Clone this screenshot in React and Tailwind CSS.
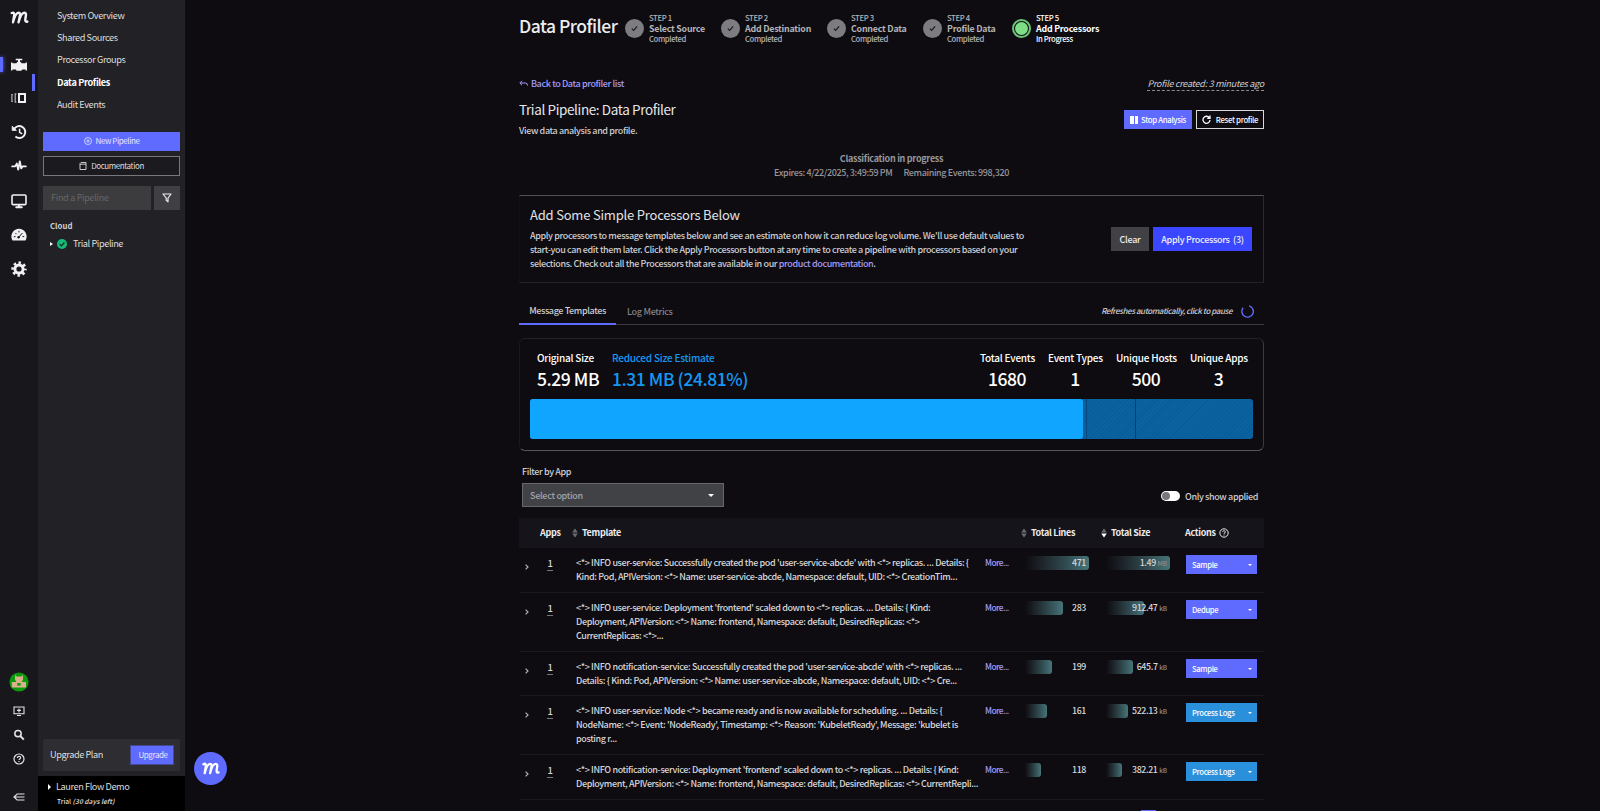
import React, { useState } from "react";

const navLinks = [
  "System Overview",
  "Shared Sources",
  "Processor Groups",
  "Data Profiles",
  "Audit Events",
];

const steps = [
  { title: "Select Source", status: "Completed", width: "w-[96px]" },
  { title: "Add Destination", status: "Completed", width: "w-[106px]" },
  { title: "Connect Data", status: "Completed", width: "w-[96px]" },
  { title: "Profile Data", status: "Completed", width: "w-[89px]" },
  { title: "Add Processors", status: "In Progress", width: "w-[90px]" },
];

const stats = [
  { label: "Total Events", value: "1680", width: "w-[54px]" },
  { label: "Event Types", value: "1", width: "w-[54px]" },
  { label: "Unique Hosts", value: "500", width: "w-[60px]" },
  { label: "Unique Apps", value: "3", width: "w-[57px]" },
];

const rows = [
  {
    lines: 471,
    size: "1.49",
    unit: "MB",
    action: "Sample",
    height: "h-[45px]",
    text: [
      "<*> INFO user-service: Successfully created the pod 'user-service-abcde' with <*> replicas. ... Details: {",
      "Kind: Pod, APIVersion: <*> Name: user-service-abcde, Namespace: default, UID: <*> CreationTim...",
    ],
  },
  {
    lines: 283,
    size: "912.47",
    unit: "kB",
    action: "Dedupe",
    height: "h-[59px]",
    text: [
      "<*> INFO user-service: Deployment 'frontend' scaled down to <*> replicas. ... Details: { Kind:",
      "Deployment, APIVersion: <*> Name: frontend, Namespace: default, DesiredReplicas: <*>",
      "CurrentReplicas: <*>...",
    ],
  },
  {
    lines: 199,
    size: "645.7",
    unit: "kB",
    action: "Sample",
    height: "h-[44px]",
    text: [
      "<*> INFO notification-service: Successfully created the pod 'user-service-abcde' with <*> replicas. ...",
      "Details: { Kind: Pod, APIVersion: <*> Name: user-service-abcde, Namespace: default, UID: <*> Cre...",
    ],
  },
  {
    lines: 161,
    size: "522.13",
    unit: "kB",
    action: "Process Logs",
    height: "h-[59px]",
    text: [
      "<*> INFO user-service: Node <*> became ready and is now available for scheduling. ... Details: {",
      "NodeName: <*> Event: 'NodeReady', Timestamp: <*> Reason: 'KubeletReady', Message: 'kubelet is",
      "posting r...",
    ],
  },
  {
    lines: 118,
    size: "382.21",
    unit: "kB",
    action: "Process Logs",
    height: "h-[45px]",
    text: [
      "<*> INFO notification-service: Deployment 'frontend' scaled down to <*> replicas. ... Details: { Kind:",
      "Deployment, APIVersion: <*> Name: frontend, Namespace: default, DesiredReplicas: <*> CurrentRepli...",
    ],
  },
];

function Logo({ className }) {
  return (
    <svg viewBox="0 0 20 14" className={className} fill="none" stroke="currentColor" strokeWidth="2.6" strokeLinecap="round" strokeLinejoin="round">
      <path d="M1.6 2.2C4 1 4.6 2.6 4.2 5L3 12.2C4.4 6.5 6.4 1.8 9 1.8c2 0 1.8 2 1.3 4.2L9 12.2c1.4-5.7 3.6-10.4 6.2-10.4 2 0 1.9 2 1.5 4.2-.6 3.4-1 6.2 1.7 5.4" />
    </svg>
  );
}

// Icons of the left rail
function RailIcon({ name }) {
  const line = {
    fill: "none",
    stroke: "currentColor",
    strokeWidth: 1.6,
    strokeLinecap: "round",
    strokeLinejoin: "round",
  };
  return (
    <svg viewBox="0 0 16 16" className="size-4 text-[#f1f1f3]" fill="currentColor">
      {name === "pipeline" && (
        <path d="M4.7 1.8h6.6v1.5H9v1.5c.8.2 1.300.7 1.600 1.500h4v-.9H16v8h-1.400v-.9h-3.400c-.2.800-.7 1.200-1.400 1.200H6.200c-.7 0-1.200-.4-1.400-1.200H1.400v.9H0v-8h1.400v.9h4c.3-.8.8-1.300 1.600-1.500V3.300H4.700z" />
      )}
      {name === "split" && (
        <>
          <path d="M8 4h6v8H8z" fill="none" stroke="currentColor" strokeWidth="2" />
          <path d="M5.400 3.900H4.200v8.200h1.200M1.900 4.700H.9v6.600h1" fill="none" stroke="#b5b5b9" strokeWidth="1.200" />
        </>
      )}
      {name === "history" && (
        <g {...line} strokeWidth="2" strokeLinecap="butt">
          <path d="M2.800 5.600A6 6 0 1 1 4.400 12.600" />
          <path d="M8.600 4.800v3.600l2.600 1.500" strokeWidth="1.500" />
          <path d="M1.200 2.200v4.200h4.200z" fill="currentColor" strokeWidth=".8" />
        </g>
      )}
      {name === "pulse" && (
        <path {...line} strokeWidth="1.900" d="M1.200 8.400h3L5.800 5.600 7.200 11.600 8.800 3.400l1.400 7L11.400 8.400h3.400" />
      )}
      {name === "monitor" && (
        <g {...line}>
          <rect x="1" y="2" width="14" height="9.600" rx="1.200" />
          <path d="M5.200 14.200h5.600M8 12v2" strokeWidth="1.900" />
        </g>
      )}
      {name === "gauge" && (
        <>
          <path d="M8 1.800a7.600 7.600 0 0 0-7 10.600c.3.900.8 1.200 1.500 1.200h11c.7 0 1.200-.3 1.500-1.200A7.600 7.600 0 0 0 8 1.800z" />
          <path d="M7.600 10.300l3.600-4M3.200 9.800l1-.3M4.600 6.200l.7.700M8 4.200v.9M12.800 9.600l-.9-.1" stroke="#19181d" strokeWidth="1" strokeLinecap="round" />
          <circle cx="7.600" cy="10.300" r="1.200" fill="#19181d" />
        </>
      )}
      {name === "gear" && (
        <g fill="none" stroke="currentColor">
          <circle cx="8" cy="8" r="4.100" strokeWidth="3" />
          <circle cx="8" cy="8" r="6.400" strokeWidth="2.600" strokeDasharray="2.500 2.527" strokeDashoffset="1.250" />
        </g>
      )}
    </svg>
  );
}

function HelpIcon({ className }) {
  return (
    <svg viewBox="0 0 12 12" className={className} fill="none" stroke="currentColor" strokeWidth="1.200">
      <circle cx="6" cy="6" r="5" />
      <path d="M4.400 4.900c0-2.200 3.300-2.100 3.200-.1 0 1.200-1.600 1.100-1.600 2.300M6 7.900v1.100" />
    </svg>
  );
}

function Rail() {
  return (
    <div className="flex w-[38px] shrink-0 flex-col items-center bg-[#18171b] text-[#e4e4e8]">
      <Logo className="mt-[11px] h-[13px] w-[19px] text-[#f4f4f6]" />
      <div className="mt-[32px] flex h-[17px] w-full items-center">
        <span className="h-[15px] w-[3px] bg-[#5f6bff] shadow-[0_0_4px_#5f6bff]" />
        <span className="ml-[8px]">
          <RailIcon name="pipeline" />
        </span>
      </div>
      <div className="mt-[17px] flex flex-col gap-[18.200px]">
        {["split", "history", "pulse", "monitor", "gauge", "gear"].map((name) => (
          <RailIcon key={name} name={name} />
        ))}
      </div>
      <svg viewBox="0 0 20 20" className="mt-auto size-[20px]">
        <circle cx="10" cy="10" r="9.600" fill="#0c9a0c" />
        <path d="M6 3l1.600 1.600h4.800L14 3v4.600L12.600 10H17v5.600H2.800V10h4.600L6 7.600z" fill="#d9b08c" />
        <path d="M8.200 11h3.400v2.600H8.200z" fill="#0c9a0c" />
      </svg>
      <svg viewBox="0 0 12 12" className="mt-[13px] size-[12px]" fill="none" stroke="currentColor" strokeWidth="1.100">
        <path d="M1 2h10v6.800H1zM4 10.500h4M6 3.400v4M4 5.400h4" />
      </svg>
      <svg viewBox="0 0 12 12" className="mt-[12px] size-[12px]" fill="none" stroke="currentColor" strokeWidth="1.500">
        <circle cx="5" cy="4.600" r="3.200" />
        <path d="M7.300 7l3.500 3.600" strokeWidth="1.900" />
      </svg>
      <HelpIcon className="mt-[12px] size-[12px]" />
      <svg viewBox="0 0 12 10" className="mt-[27px] mb-[9px] h-[10px] w-[12px]" fill="none" stroke="currentColor" strokeWidth="1.200">
        <path d="M1 5h10.500M4.600 1.600L1 5l3.600 3.400M4.800 2h6.700M4.800 8h6.700" />
      </svg>
    </div>
  );
}

function Sidebar() {
  return (
    <div className="flex w-[147px] shrink-0 flex-col bg-[#222226] tracking-[-0.42px] text-[#dededf]">
      <div className="flex flex-col pt-[4.500px]">
        {navLinks.map((link) => (
          <a
            key={link}
            className={
              link === "Data Profiles"
                ? "relative flex h-[22.200px] items-center pl-[19px] text-[9.200px] font-bold tracking-[-0.36px] text-white"
                : "flex h-[22.200px] items-center pl-[19px] text-[9.200px]"
            }
          >
            {link === "Data Profiles" && (
              <span className="absolute top-[3px] left-[-6px] h-[17px] w-[3px] bg-[#5f6bff]" />
            )}
            {link}
          </a>
        ))}
      </div>
      <div className="mt-[16.500px] flex flex-col pr-[5px] pl-[5px]">
        <button className="flex h-[19px] items-center justify-center gap-[4px] bg-[#5f6bff] text-[8px] text-[#e6e8ff]">
          <svg viewBox="0 0 8 8" className="size-[8px]" fill="none" stroke="currentColor" strokeWidth=".8">
            <circle cx="4" cy="4" r="3.500" />
            <path d="M4 2.200v3.600M2.200 4h3.600" />
          </svg>
          New Pipeline
        </button>
        <button className="mt-[5px] flex h-[20px] items-center justify-center gap-[4px] border border-[#77777c] bg-[#1b1a1e] text-[8px]">
          <svg viewBox="0 0 8 8" className="size-[8px]" fill="none" stroke="currentColor" strokeWidth=".9">
            <path d="M1 1.500L2 .5h5v7H1zM1 2.200h6" />
          </svg>
          Documentation
        </button>
        <div className="mt-[10px] flex h-[24px] gap-[3px]">
          <div className="flex flex-1 items-center bg-[#3c3c3f] pl-[8px] text-[9px] tracking-[-0.28px] text-[#666669]">
            Find a Pipeline
          </div>
          <div className="flex w-[26px] items-center justify-center bg-[#404044]">
            <svg viewBox="0 0 10 10" className="size-[10px] text-[#ececee]" fill="none" stroke="currentColor" strokeWidth="1.200" strokeLinejoin="round">
              <path d="M1 1h8L6 5v3.800L4.200 7.400V5z" />
            </svg>
          </div>
        </div>
        <div className="mt-[9px] h-[14px] pl-[7px] text-[7.800px] leading-[14px] font-bold tracking-normal text-[#cfcfd1]">
          Cloud
        </div>
        <div className="mt-[3px] flex h-[16px] items-center pl-[7px] text-[9.200px]">
          <span className="h-0 w-0 border-y-[2.500px] border-l-[3px] border-y-transparent border-l-white" />
          <svg viewBox="0 0 10 10" className="ml-[4px] size-[10px]">
            <circle cx="5" cy="5" r="5" fill="#16b877" />
            <path d="M2.700 5.100l1.700 1.700 3-3.300" fill="none" stroke="#17251f" strokeWidth="1.200" />
          </svg>
          <span className="ml-[6px]">Trial Pipeline</span>
        </div>
      </div>
      <div className="mx-[5px] mt-auto mb-[5px] flex h-[32px] items-center justify-between rounded-xs bg-[#2e2e32] pr-[6px] pl-[7px] text-[9.200px]">
        Upgrade Plan
        <button className="h-[20px] w-[44px] border border-[#45498f] bg-[#5f6bff] pl-[2px] text-[8px] text-[#e6e8ff]">
          Upgrade
        </button>
      </div>
      <div className="h-[35px] bg-black pt-[4px] pl-[10px]">
        <div className="flex h-[14px] items-center gap-[5px] text-[9.200px]">
          <span className="h-0 w-0 border-y-[3px] border-l-[3px] border-y-transparent border-l-white" />
          Lauren Flow Demo
        </div>
        <div className="pl-[9px] text-[6.600px] leading-[14px] font-medium tracking-normal">
          Trial <i className="font-bold text-[#c5c5c8]">(30 days left)</i>
        </div>
      </div>
    </div>
  );
}

function Steps() {
  return (
    <div className="flex h-[58px] items-center">
      <h1 className="w-[106px] pb-[7px] text-[17.500px] tracking-[-0.5px] whitespace-nowrap text-[#ededef]">
        Data Profiler
      </h1>
      {steps.map((step, i) => {
        const current = i === steps.length - 1;
        return (
          <div key={step.title} className={`flex items-center ${step.width} shrink-0`}>
            {current ? (
              <span className="flex size-[19px] shrink-0 items-center justify-center rounded-full border-2 border-[#6cc476]">
                <span className="size-[13px] rounded-full bg-[#7ede86]" />
              </span>
            ) : (
              <span className="flex size-[19px] shrink-0 items-center justify-center rounded-full bg-[#7d7d81]">
                <svg viewBox="0 0 8 8" className="size-[7px]" fill="none" stroke="#1b1a1f" strokeWidth="1.400">
                  <path d="M1 4.200l2 2L7 1.600" />
                </svg>
              </span>
            )}
            <div
              className={
                current
                  ? "ml-[5px] text-[7.700px] leading-[10.700px] font-medium whitespace-nowrap text-white"
                  : "ml-[5px] text-[7.700px] leading-[10.700px] whitespace-nowrap text-[#b4b4b8]"
              }
            >
              <div>STEP {i + 1}</div>
              <div className="text-[8.800px] font-bold tracking-[-0.2px]">{step.title}</div>
              <div>{step.status}</div>
            </div>
          </div>
        );
      })}
    </div>
  );
}

function SortIcon({ down }) {
  return (
    <svg viewBox="0 0 6 10" className="h-[10px] w-[6px] shrink-0">
      <path d="M3 .5L5.800 4.400H.2z" fill="#6a6a70" />
      <path d="M3 9.500L.2 5.600h5.600z" fill={down ? "#ffffff" : "#6a6a70"} />
    </svg>
  );
}

// Bar behind the number, scaled on the biggest template
function MeterCell({ lines, children }) {
  return (
    <div className="relative mt-[8px] h-[14px] w-[64px] shrink-0 text-right text-[8.800px] leading-[14px]">
      <div
        className="absolute inset-y-0 left-0 rounded-r-[3px] bg-linear-to-r from-[#0e0c11] to-[#45757a]"
        style={{ width: `${(lines / 471) * 100}%` }}
      />
      <span className="relative whitespace-nowrap">{children}</span>
    </div>
  );
}

function TemplateRow({ row }) {
  return (
    <div className={`flex border-b border-[#19181d] ${row.height}`}>
      <svg viewBox="0 0 4 6" className="mt-[16px] ml-[6px] h-[6px] w-[4px]" fill="none" stroke="#b0b0b4" strokeWidth="1.200">
        <path d="M.6.600L3 3 .6 5.400" />
      </svg>
      <div className="mt-[8px] ml-[18px] h-[15px] w-[6px] border-b border-dashed border-[#77777c] text-center text-[9.500px] leading-[14px]">
        1
      </div>
      <div className="mt-[8px] ml-[23px] w-[409px] text-[9px] leading-[14.200px] whitespace-nowrap">
        {row.text.map((line) => (
          <div key={line}>{line}</div>
        ))}
      </div>
      <a className="mt-[7px] w-[40px] text-[8.400px] leading-[14px] tracking-[-0.550px] text-[#a39cf6]">More...</a>
      <MeterCell lines={row.lines}>
        <span className="mr-[3px]">{row.lines}</span>
      </MeterCell>
      <div className="w-[17px]" />
      <MeterCell lines={row.lines}>
        {row.size} <span className="mr-[3px] text-[6.500px] tracking-[-0.1px] text-[#8b8b90]">{row.unit}</span>
      </MeterCell>
      <button
        className={
          row.action === "Process Logs"
            ? "mt-[7px] ml-[16px] flex h-[19px] w-[71px] items-center justify-between bg-[#2b90dc] pr-[5px] pl-[6px] text-[7.700px] font-medium text-white"
            : "mt-[7px] ml-[16px] flex h-[19px] w-[71px] items-center justify-between bg-[#5f6bff] pr-[5px] pl-[6px] text-[7.700px] font-medium text-white"
        }
      >
        {row.action}
        <span className="h-0 w-0 border-x-[2.500px] border-t-[2.500px] border-x-transparent border-t-white" />
      </button>
    </div>
  );
}

function TemplatesTable() {
  return (
    <div className="mt-[11px] w-[745px] text-[#d6d6d9]">
      <div className="flex h-[30px] items-center bg-[#15141a] pb-px text-[9px] font-bold tracking-[-0.3px] text-[#ececee]">
        <div className="w-[53px] pl-[21px]">Apps</div>
        <div className="flex w-[449px] items-center gap-[4px]">
          <SortIcon />
          Template
        </div>
        <div className="flex w-[80px] items-center gap-[4px]">
          <SortIcon />
          Total Lines
        </div>
        <div className="flex w-[84px] items-center gap-[4px]">
          <SortIcon down />
          Total Size
        </div>
        <div className="flex items-center gap-[3px]">
          Actions
          <HelpIcon className="size-[10px]" />
        </div>
      </div>
      {rows.map((row) => (
        <TemplateRow key={row.lines} row={row} />
      ))}
      <div className="mt-[10px] ml-[622px] h-[10px] w-[15px] bg-[#5f6bff]" />
    </div>
  );
}

function App() {
  const [onlyApplied, setOnlyApplied] = useState(false);

  return (
    <div className="flex h-[811px] w-[1600px] overflow-hidden bg-[#0e0c11] font-['Noto_Sans_CJK_JP','Open_Sans',sans-serif] leading-none">
      <Rail />
      <Sidebar />
      <main className="ml-[334px] w-[745px] shrink-0 font-medium tracking-[-0.38px] text-[#cdcdd0]">
        <Steps />

        <div className="mt-[16px] flex items-center justify-between text-[9px]">
          <a className="flex h-[18px] items-center gap-[3px] text-[#a39cf6]">
            <svg viewBox="0 0 9 7" className="h-[7px] w-[9px]" fill="none" stroke="currentColor" strokeWidth="1">
              <path d="M3 .8L.8 3 3 5.200M1 3h5.500q2 0 2 2.500" />
            </svg>
            Back to Data profiler list
          </a>
          <span className="mt-[3px] border-b border-dashed border-[#8b8b90] pb-[2px] font-normal tracking-[-0.26px] italic">
            Profile created: 3 minutes ago
          </span>
        </div>

        <div className="mt-[6px] flex h-[42px] justify-between">
          <div>
            <h2 className="text-[13.500px] leading-[23px] font-normal tracking-[-0.38px] text-[#e6e6e8]">
              Trial Pipeline: Data Profiler
            </h2>
            <p className="text-[9px] leading-[19px]">View data analysis and profile.</p>
          </div>
          <div className="mt-[12px] flex gap-[4px] text-[7.800px] text-white">
            <button className="flex h-[19px] w-[68px] items-center justify-center gap-[3px] bg-[#5f6bff] tracking-[-0.350px]">
              <span className="flex gap-px">
                <span className="h-[8px] w-[3.500px] bg-white" />
                <span className="h-[8px] w-[3.500px] bg-white" />
              </span>
              Stop Analysis
            </button>
            <button className="flex h-[19px] w-[68px] items-center justify-center gap-[5px] border border-[#d8d8da] tracking-[-0.350px]">
              <svg viewBox="0 0 9 9" className="size-[9px]" fill="none" stroke="currentColor" strokeWidth="1.300">
                <path d="M7.400 2.800A3.500 3.500 0 1 0 8 5M8 .6v2.800H5.200" />
              </svg>
              Reset profile
            </button>
          </div>
        </div>

        <div className="mt-[12px] text-center text-[9px] leading-[14px] text-[#97979b]">
          <div className="font-bold tracking-[-0.28px]">Classification in progress</div>
          <div className="flex justify-center gap-[11px]">
            <span>Expires: 4/22/2025, 3:49:59 PM</span>
            <span>Remaining Events: 998,320</span>
          </div>
        </div>

        <div className="mt-[15px] flex h-[88px] items-start justify-between border border-t-[#515156] border-r-[#2a292e] border-b-[#222126] border-l-[#131116] pr-[11px] pl-[10px]">
          <div className="pt-[7px]">
            <h3 className="text-[13px] leading-[23px] font-normal tracking-[-0.2px] text-[#e2e2e4]">
              Add Some Simple Processors Below
            </h3>
            <p className="pt-[3px] text-[9px] leading-[14.200px] whitespace-nowrap">
              Apply processors to message templates below and see an estimate on how it can reduce log volume. We'll use default values to
              <br />
              start-you can edit them later. Click the Apply Processors button at any time to create a pipeline with processors based on your
              <br />
              selections. Check out all the Processors that are available in our{" "}
              <a className="text-[#a39cf6]">product documentation</a>.
            </p>
          </div>
          <div className="mt-[31px] flex gap-[4px] text-[9px] tracking-[-0.3px] text-[#eeeef0]">
            <button className="h-[24px] w-[38px] bg-[#414145]">Clear</button>
            <button className="h-[24px] w-[99px] bg-[#3a46ff] whitespace-pre">
              {"Apply Processors  (3)"}
            </button>
          </div>
        </div>

        <div className="mt-[14px] flex h-[28px] items-stretch border-b border-[#3a393e] text-[9px]">
          <div className="-mb-px flex w-[97px] items-center justify-center border-b-2 border-[#5f6bff] pt-px">
            Message Templates
          </div>
          <div className="flex items-center pt-px pl-[11px] tracking-[-0.3px] text-[#838387]">Log Metrics</div>
          <div className="ml-auto flex items-center gap-[9px] pt-px pr-[10px] text-[8px] tracking-[-0.430px] italic">
            Refreshes automatically, click to pause
            <svg viewBox="0 0 12 12" className="size-[13px]" fill="none" stroke="#5f6bff" strokeWidth="1.300">
              <path d="M7.500 .8A5.300 5.300 0 1 1 2 2.500" />
            </svg>
          </div>
        </div>

        <div className="mt-[13px] h-[113px] rounded-md border border-t-[#222126] border-r-[#3a393e] border-b-[#55555a] border-l-[#19181d] px-[10px] pt-[10px]">
          <div className="flex h-[50px] pl-[7px] text-[10px] leading-[18px] font-medium tracking-[-0.230px] text-white">
            <div className="w-[75px]">
              <div>Original Size</div>
              <div className="text-[17.500px] leading-[24px] tracking-[-0.450px] whitespace-nowrap">5.29 MB</div>
            </div>
            <div className="text-[#1598f3]">
              <div>Reduced Size Estimate</div>
              <div className="text-[17.500px] leading-[24px] tracking-[-0.450px] whitespace-nowrap">1.31 MB (24.81%)</div>
            </div>
            <div className="ml-auto flex gap-[14px] pr-[6px] text-center">
              {stats.map((stat) => (
                <div key={stat.label} className={`${stat.width} whitespace-nowrap`}>
                  <div>{stat.label}</div>
                  <div className="text-[17.500px] leading-[24px] tracking-[-0.450px]">{stat.value}</div>
                </div>
              ))}
            </div>
          </div>
          <div className="flex h-[40px] overflow-hidden rounded-[3px] bg-[repeating-linear-gradient(135deg,#085c9a_0_1px,#0a629f_1px_3px)]">
            <div className="w-[553px] rounded-r-[3px] bg-[#10a5ff]" />
            <div className="w-[4px] border-r border-[#06477c]" />
            <div className="w-[49px] border-r border-[#06406e]" />
          </div>
        </div>

        <div className="mt-[11px] flex h-[45px] justify-between pr-[6px] pl-[3px] text-[9px]">
          <div>
            <div className="pt-px leading-[18px]">Filter by App</div>
            <div className="mt-[2px] flex h-[24px] w-[202px] items-center justify-between border border-[#66666b] bg-[#414246] pr-[9px] pl-[7px] tracking-[-0.3px] text-[#a2a2a6]">
              Select option
              <span className="h-0 w-0 border-x-[3.500px] border-t-[3.500px] border-x-transparent border-t-white" />
            </div>
          </div>
          <label className="mt-[27px] flex h-[14px] items-center gap-[5px]" onClick={() => setOnlyApplied(!onlyApplied)}>
            <span className={onlyApplied ? "flex h-[10px] w-[19px] justify-end rounded-full bg-white p-px" : "flex h-[10px] w-[19px] rounded-full bg-white p-px"}>
              <span className="size-[8px] rounded-full bg-[#77777b]" />
            </span>
            Only show applied
          </label>
        </div>

        <TemplatesTable />
      </main>
      <div className="fixed top-[752px] left-[194px] flex size-[33px] items-center justify-center rounded-full bg-[#5f6bff] text-white">
        <Logo className="h-[13px] w-[18px]" />
      </div>
    </div>
  );
}

export default App;
